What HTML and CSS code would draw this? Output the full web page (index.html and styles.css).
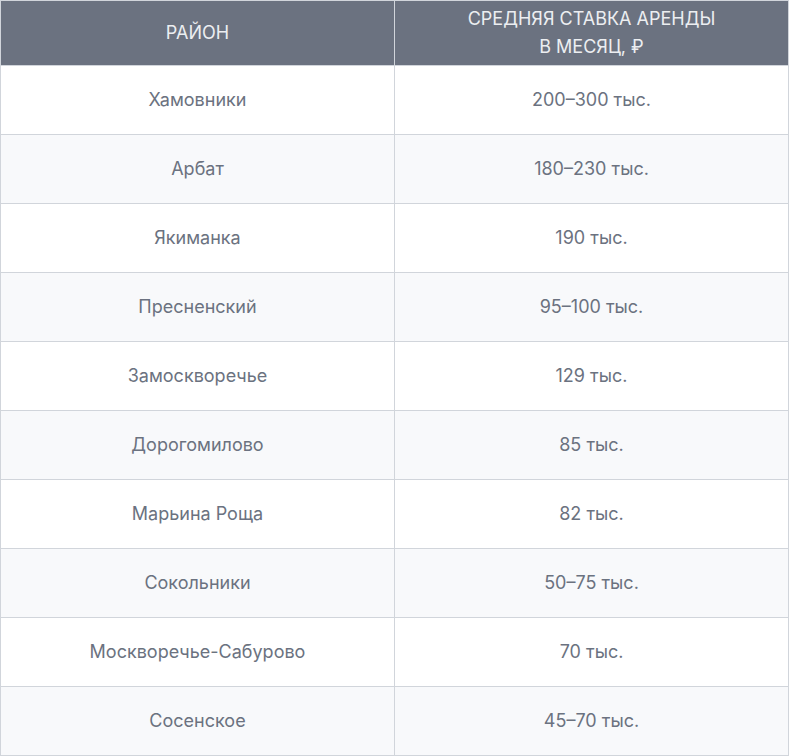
FILE: index.html
```html
<!DOCTYPE html>
<html lang="ru">
<head>
<meta charset="utf-8">
<link rel="stylesheet" href="styles.css">
</head>
<body>
<table class="rent">
  <thead>
    <tr><th>Район</th><th>Средняя ставка аренды<br>в месяц, ₽</th></tr>
  </thead>
  <tbody>
    <tr><td>Хамовники</td><td>200–300 тыс.</td></tr>
    <tr><td>Арбат</td><td>180–230 тыс.</td></tr>
    <tr><td>Якиманка</td><td>190 тыс.</td></tr>
    <tr><td>Пресненский</td><td>95–100 тыс.</td></tr>
    <tr><td>Замоскворечье</td><td>129 тыс.</td></tr>
    <tr><td>Дорогомилово</td><td>85 тыс.</td></tr>
    <tr><td>Марьина Роща</td><td>82 тыс.</td></tr>
    <tr><td>Сокольники</td><td>50–75 тыс.</td></tr>
    <tr><td>Москворечье-Сабурово</td><td>70 тыс.</td></tr>
    <tr><td>Сосенское</td><td>45–70 тыс.</td></tr>
  </tbody>
</table>
</body>
</html>
```
FILE: styles.css
```css
html, body {
  margin: 0;
  padding: 0;
  background: #ffffff;
}
.rent {
  width: 789px;
  border-collapse: collapse;
  table-layout: fixed;
  font-family: Inter, "Noto Sans", sans-serif;
  font-size: 18px;
  color: #6b7280;
}
.rent th, .rent td {
  border: 1px solid #d1d5db;
  text-align: center;
  vertical-align: middle;
  padding: 0 8px;
}
.rent th {
  background: #6b7280;
  color: #eceef1;
  font-weight: 400;
  text-transform: uppercase;
  height: 64px;
  line-height: 28px;
  font-size: 18px;
}
.rent td {
  height: 67px;
  box-sizing: content-box;
  padding-top: 0;
  padding-bottom: 1px;
}
.rent tbody tr:nth-child(even) td {
  background: #f8f9fb;
}
.rent th:first-child, .rent td:first-child {
  width: 377px;
}
```
